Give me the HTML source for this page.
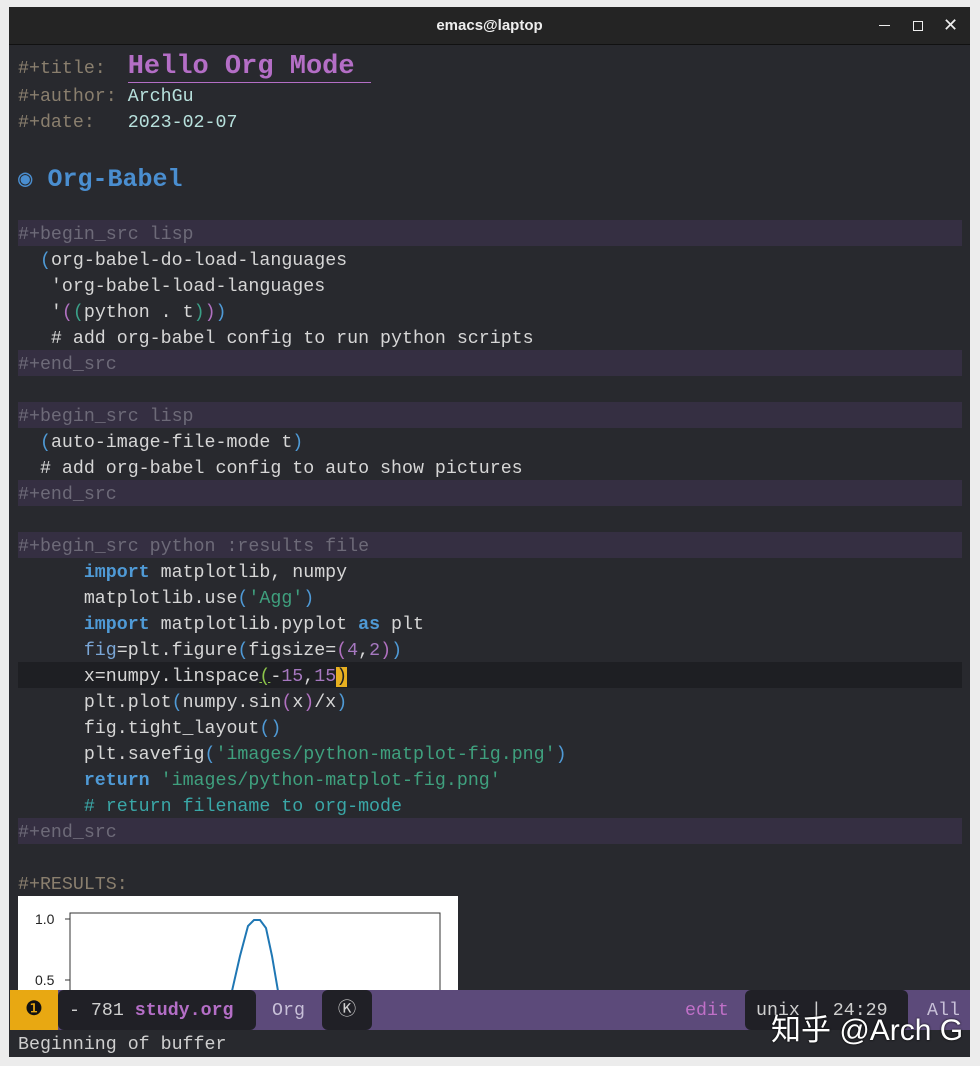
<!DOCTYPE html>
<html><head><meta charset="utf-8"><style>
body{margin:0;width:980px;height:1066px;background:#ececec;position:relative;overflow:hidden;font-family:"Liberation Mono","DejaVu Sans Mono",monospace;}
.win{position:absolute;left:9px;top:7px;width:961px;height:1050px;background:#28292e;overflow:hidden}
.tb{position:absolute;left:0;top:0;width:961px;height:37px;background:#242424;border-bottom:1px solid #111;color:#eee;font:600 15px "Liberation Sans",sans-serif;text-align:center;line-height:37px}
.l{position:absolute;left:9px;width:944px;height:26px;line-height:30px;font-size:18.3px;white-space:pre;color:#d6d6d6}
.bs{background:#352f42;color:#6d6a78}
.kw{color:#8a7f6e}
.p{color:#4f9ad6}.m{color:#b070c0}.g{color:#3aa088}
.b{color:#4f9ad6;font-weight:bold}
.s{color:#3fa07e}.c{color:#3aa7a7}.n{color:#a678c0}
.ml{position:absolute;left:1px;top:983px;width:960px;height:40px;background:#5c4a7a;font-size:18.3px;line-height:42px;white-space:pre}
.ml>div{position:absolute;top:0;height:40px}
.seg{background:#202026;border-radius:6px}
</style></head><body>
<div class="win">
<div class="tb">emacs@laptop
<span style="position:absolute;left:870px;top:18px;width:11px;height:1px;background:#eee"></span>
<span style="position:absolute;left:904px;top:14px;width:8px;height:8px;border:1px solid #eee"></span>
<span style="position:absolute;left:934px;top:0;font-weight:normal;font-size:18px">✕</span>
</div>
<div class="l" style="top:41px;height:34px;line-height:38px"><span class="kw">#+title:  </span><span style="color:#b46ec6;font-weight:bold;font-size:27px;border-bottom:1px solid #b46ec6">Hello Org Mode </span></div>
<div class="l" style="top:75px"><span class="kw">#+author: </span><span style="color:#b7e0dc">ArchGu</span></div>
<div class="l" style="top:101px"><span class="kw">#+date:   </span><span style="color:#b7e0dc">2023-02-07</span></div>
<div class="l" style="top:153px;height:36px;line-height:40px;font-size:25px;font-weight:bold;color:#4a8ed0"><span style="font-size:24px;font-weight:normal">◉</span> Org-Babel</div>
<div class="l bs" style="top:213px">#+begin_src lisp</div>
<div class="l" style="top:239px">  <span class="p">(</span>org-babel-do-load-languages</div>
<div class="l" style="top:265px">   'org-babel-load-languages</div>
<div class="l" style="top:291px">   '<span class="m">(</span><span class="g">(</span>python . t<span class="g">)</span><span class="m">)</span><span class="p">)</span></div>
<div class="l" style="top:317px">   # add org-babel config to run python scripts</div>
<div class="l bs" style="top:343px">#+end_src</div>
<div class="l bs" style="top:395px">#+begin_src lisp</div>
<div class="l" style="top:421px">  <span class="p">(</span>auto-image-file-mode t<span class="p">)</span></div>
<div class="l" style="top:447px">  # add org-babel config to auto show pictures</div>
<div class="l bs" style="top:473px">#+end_src</div>
<div class="l bs" style="top:525px">#+begin_src python :results file</div>
<div class="l" style="top:551px">      <span class="b">import</span> matplotlib, numpy</div>
<div class="l" style="top:577px">      matplotlib.use<span class="p">(</span><span class="s">'Agg'</span><span class="p">)</span></div>
<div class="l" style="top:603px">      <span class="b">import</span> matplotlib.pyplot <span class="b">as</span> plt</div>
<div class="l" style="top:629px">      <span style="color:#7aa6d6">fig</span>=plt.figure<span class="p">(</span>figsize=<span class="m">(</span><span class="n">4</span>,<span class="n">2</span><span class="m">)</span><span class="p">)</span></div>
<div class="l" style="top:655px;background:#1e1f23">      x=numpy.linspace<span style="color:#8bc34a;text-decoration:underline">(</span>-<span class="n">15</span>,<span class="n">15</span><span style="background:#e8b020;color:#222">)</span></div>
<div class="l" style="top:681px">      plt.plot<span class="p">(</span>numpy.sin<span class="m">(</span>x<span class="m">)</span>/x<span class="p">)</span></div>
<div class="l" style="top:707px">      fig.tight_layout<span class="p">()</span></div>
<div class="l" style="top:733px">      plt.savefig<span class="p">(</span><span class="s">'images/python-matplot-fig.png'</span><span class="p">)</span></div>
<div class="l" style="top:759px">      <span class="b">return</span> <span class="s">'images/python-matplot-fig.png'</span></div>
<div class="l" style="top:785px">      <span class="c"># return filename to org-mode</span></div>
<div class="l bs" style="top:811px">#+end_src</div>
<div class="l kw" style="top:863px">#+RESULTS:</div>
<div style="position:absolute;left:9px;top:889px;width:440px;height:94px;background:#fff">
<svg width="440" height="94" style="position:absolute;left:0;top:0">
<rect x="52" y="17" width="370" height="90" fill="none" stroke="#333"/>
<text x="17" y="28" font-family="Liberation Sans" font-size="14" fill="#222">1.0</text>
<text x="17" y="89" font-family="Liberation Sans" font-size="14" fill="#222">0.5</text>
<line x1="47" y1="23" x2="52" y2="23" stroke="#333"/><line x1="47" y1="84" x2="52" y2="84" stroke="#333"/>
<polyline points="214,95 222,60 230,30 236,24 242,24 248,32 254,60 260,95" fill="none" stroke="#1f77b4" stroke-width="2"/>
</svg></div>
<div class="ml">
<div style="left:0;width:48px;background:#e8a812;color:#111;text-align:center;font-size:20px">❶</div>
<div class="seg" style="left:48px;width:198px;color:#cfcfcf"> - 781 <span style="color:#b46ec6;font-weight:bold">study.org</span></div>
<div style="left:262px;color:#c8c0d8">Org</div>
<div class="seg" style="left:312px;width:50px;color:#cfcfcf;text-align:center">Ⓚ</div>
<div style="left:675px;color:#c070c8">edit</div>
<div class="seg" style="left:735px;width:163px;color:#cfcfcf"> unix | 24:29</div>
<div style="left:917px;color:#c8c0d8">All</div>
</div>
<div class="l" style="top:1023px;height:27px;color:#cfcfcf">Beginning of buffer</div>
<div style="position:absolute;left:762px;top:998px;color:#fff;font:30px 'Liberation Sans','Noto Sans CJK SC',sans-serif;white-space:nowrap;text-shadow:0 0 2px #000">知乎 @Arch G</div>
</div>
</body></html>
